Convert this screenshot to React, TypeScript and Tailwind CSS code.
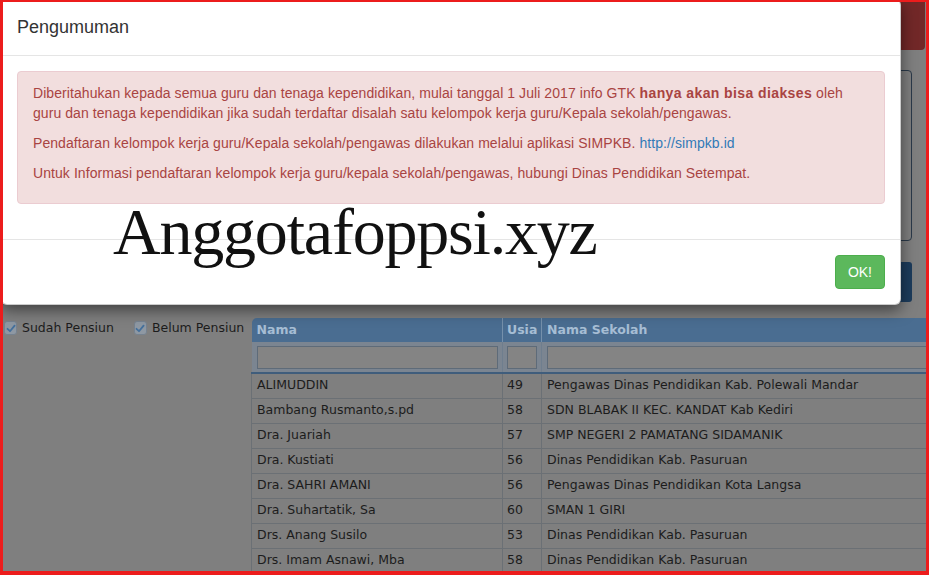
import React from "react";

type Guru = { nama: string; usia: number; sekolah: string };

const rows: Guru[] = [
  { nama: "ALIMUDDIN", usia: 49, sekolah: "Pengawas Dinas Pendidikan Kab. Polewali Mandar" },
  { nama: "Bambang Rusmanto,s.pd", usia: 58, sekolah: "SDN BLABAK II KEC. KANDAT Kab Kediri" },
  { nama: "Dra. Juariah", usia: 57, sekolah: "SMP NEGERI 2 PAMATANG SIDAMANIK" },
  { nama: "Dra. Kustiati", usia: 56, sekolah: "Dinas Pendidikan Kab. Pasuruan" },
  { nama: "Dra. SAHRI AMANI", usia: 56, sekolah: "Pengawas Dinas Pendidikan Kota Langsa" },
  { nama: "Dra. Suhartatik, Sa", usia: 60, sekolah: "SMAN 1 GIRI" },
  { nama: "Drs. Anang Susilo", usia: 53, sekolah: "Dinas Pendidikan Kab. Pasuruan" },
  { nama: "Drs. Imam Asnawi, Mba", usia: 58, sekolah: "Dinas Pendidikan Kab. Pasuruan" },
];

function Check({ label }: { label: string }) {
  return (
    <label className="flex items-center gap-[5px] h-[14px]">
      <span className="w-[13px] h-[14px] rounded-[3px] border border-[#76828f] bg-[#8e98a3] flex items-center justify-center">
        <svg width="10" height="9" viewBox="0 0 10 9">
          <path d="M1.5 4.8 L4 7.2 L8.6 1.6" fill="none" stroke="#44709c" strokeWidth="1.8" strokeLinecap="round" strokeLinejoin="round" />
        </svg>
      </span>
      <span>{label}</span>
    </label>
  );
}

export default function App() {
  return (
    <div className="relative w-[929px] h-[575px] overflow-hidden bg-[#7f7f7f] font-['DejaVu_Sans',Verdana,sans-serif] text-[12.5px] text-[#1c1c1c]">
      {/* halaman di belakang backdrop (warna sudah diredupkan) */}
      <div className="flex flex-col">
        <div className="h-[310px] flex flex-col items-end">
          <div className="h-[50px] w-[80px] mr-[4px] bg-[#722828] rounded-br-[4px]" />
          <div className="h-[171px] w-[200px] mt-[20px] mr-[17px] border border-[#2b3a4a] rounded-[4px]" />
          <div className="h-[40px] w-[200px] mt-[21px] mr-[17px] bg-[#1d3c5c] rounded-[3px]" />
        </div>

        <div className="flex">
          <div className="w-[251px] shrink-0 pt-[11px] pl-[4px] flex items-start">
            <Check label="Sudah Pensiun" />
            <div className="ml-[20px]">
              <Check label="Belum Pensiun" />
            </div>
          </div>

          <div className="pt-[8px] shrink-0">
            <table className="border-collapse w-[700px] table-fixed">
              <colgroup>
                <col className="w-[251px]" />
                <col className="w-[39px]" />
                <col />
              </colgroup>
              <thead>
                <tr className="h-[24px] bg-[#4a6d91] text-[#a6bdd4] font-bold text-left">
                  <th className="pl-[5px] border-r border-[#7590ab] rounded-tl-[5px]">Nama</th>
                  <th className="pl-[4px] border-r border-[#7590ab]">Usia</th>
                  <th className="pl-[5px]">Nama Sekolah</th>
                </tr>
                <tr className="h-[31px] bg-[#7b8591] border-b-2 border-[#3f5d7c]">
                  <th className="pl-[5px] pr-[4px] border-r border-[#6f7e8e]">
                    <div className="h-[23px] border border-[#5e6b79] bg-[#848484]" />
                  </th>
                  <th className="px-[4px] border-r border-[#6f7e8e]">
                    <div className="h-[23px] border border-[#5e6b79] bg-[#848484]" />
                  </th>
                  <th className="pl-[5px]">
                    <div className="h-[23px] border border-[#5e6b79] bg-[#848484]" />
                  </th>
                </tr>
              </thead>
              <tbody>
                {rows.map((r) => (
                  <tr key={r.nama} className="h-[25px] border-b border-[#6b7075]">
                    <td className="pl-[5px] border-l border-r border-[#6b7075] whitespace-nowrap">{r.nama}</td>
                    <td className="pl-[4px] border-r border-[#6b7075]">{r.usia}</td>
                    <td className="pl-[5px] whitespace-nowrap">{r.sekolah}</td>
                  </tr>
                ))}
              </tbody>
            </table>
          </div>
        </div>
      </div>

      {/* modal pengumuman */}
      <div className="absolute left-[1px] top-[-1px] w-[900px] bg-white border border-black/20 rounded-[6px] shadow-[0_5px_15px_rgba(0,0,0,0.5)] font-['Liberation_Sans',Arial,sans-serif] text-[14px] leading-[20px] text-[#333]">
        <div className="px-[15px] pt-[15px] pb-[14px] border-b border-[#e5e5e5]">
          <h4 className="text-[18px] leading-[1.42857]">Pengumuman</h4>
        </div>
        <div className="p-[15px]">
          <div className="mb-[20px] border border-[#ebccd1] bg-[#f2dede] text-[#a94442] rounded-[4px] px-[15px] pt-[11px] pb-[20px] tracking-[0.07px]">
            <p className="mb-[10px]">
              Diberitahukan kepada semua guru dan tenaga kependidikan, mulai tanggal 1 Juli 2017 info GTK{" "}
              <b className="tracking-[0.4px]">hanya akan bisa diakses</b> oleh guru dan tenaga kependidikan jika sudah
              terdaftar disalah satu kelompok kerja guru/Kepala sekolah/pengawas.
            </p>
            <p className="mb-[10px]">
              Pendaftaran kelompok kerja guru/Kepala sekolah/pengawas dilakukan melalui aplikasi SIMPKB.{" "}
              <a href="#" className="text-[#337ab7]">http://simpkb.id</a>
            </p>
            <p>
              Untuk Informasi pendaftaran kelompok kerja guru/kepala sekolah/pengawas, hubungi Dinas Pendidikan
              Setempat.
            </p>
          </div>
        </div>
        <div className="p-[15px] border-t border-[#e5e5e5] flex justify-end">
          <button className="h-[34px] px-[12px] bg-[#5cb85c] border border-[#4cae4c] rounded-[4px] text-white text-[14px]">
            OK!
          </button>
        </div>
      </div>

      {/* watermark */}
      <div className="absolute left-[113px] top-[199px] font-['Liberation_Serif','Times_New_Roman',serif] text-[66px] leading-none tracking-[-1.2px] text-[#111]">
        Anggotafoppsi.xyz
      </div>

      {/* bingkai merah */}
      <div className="absolute inset-0 border-t-2 border-l-[3px] border-r-[3px] border-b-4 border-[#ec1c1c] pointer-events-none" />
    </div>
  );
}
